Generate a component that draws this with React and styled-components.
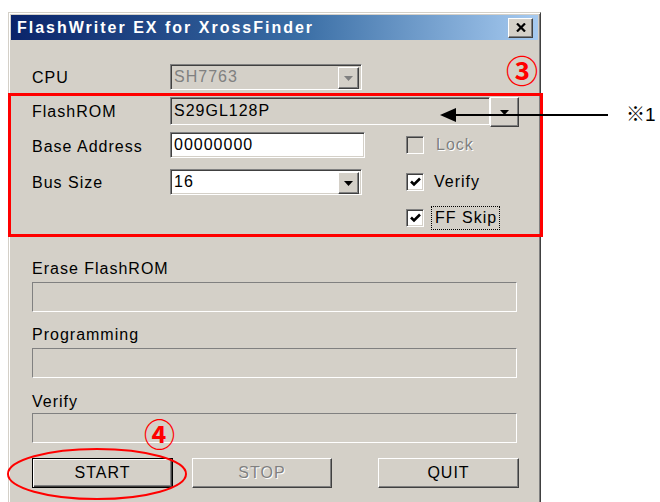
import React from 'react';
import styled, { createGlobalStyle, css } from 'styled-components';

const Global = createGlobalStyle`
  html, body { margin: 0; padding: 0; background: #fff; }
  body { font-family: "Liberation Sans", Arial, sans-serif; }
`;

const FACE = '#d4d0c8';
const SHADOW = '#808080';
const DARK = '#404040';

const Page = styled.div`
  position: relative;
  width: 660px;
  height: 502px;
  overflow: hidden;
  box-sizing: border-box;
  padding: 12px 0 0 8px;
  background: #fff;
`;

const Window = styled.div`
  width: 533px;
  height: 500px;
  box-sizing: border-box;
  background: ${FACE};
  border: 1px solid;
  border-color: ${FACE} ${DARK} ${DARK} ${FACE};
  box-shadow: inset 1px 1px #fff, inset -1px -1px ${SHADOW};
  padding: 2px;
  display: flex;
  flex-direction: column;
`;

const TitleBar = styled.div`
  height: 25px;
  flex: none;
  display: flex;
  align-items: center;
  justify-content: space-between;
  padding: 0 5px 0 6px;
  background: linear-gradient(to right, #0a246a 0%, #3a6ea5 55%, #a6caf0 100%);
`;

const Title = styled.span`
  color: #fff;
  font-weight: bold;
  font-size: 16px;
  letter-spacing: 2px;
  white-space: nowrap;
`;

const raised = css`
  border: 1px solid;
  border-color: #fff ${DARK} ${DARK} #fff;
  box-shadow: inset -1px -1px ${SHADOW}, inset 1px 1px ${FACE};
  background: ${FACE};
  box-sizing: border-box;
`;

const sunken = css`
  border: 1px solid;
  border-color: ${SHADOW} #fff #fff ${SHADOW};
  box-shadow: inset 1px 1px ${DARK}, inset -1px -1px ${FACE};
  box-sizing: border-box;
`;

const CloseButton = styled.div`
  ${raised};
  width: 25px;
  height: 20px;
  display: flex;
  align-items: center;
  justify-content: center;
`;

const Body = styled.div`
  padding: 24px 0 0 21px;
  display: flex;
  flex-direction: column;
`;

const Row = styled.div`
  display: flex;
  align-items: center;
  height: ${(p) => p.$h}px;
  margin-top: ${(p) => p.$mt || 0}px;
`;

const Label = styled.span`
  width: 138px;
  flex: none;
  font-size: 16px;
  letter-spacing: 1px;
  color: #000;
  white-space: nowrap;
  padding-top: ${(p) => p.$pt || 0}px;
`;

const Field = styled.div`
  ${sunken};
  position: relative;
  display: flex;
  align-items: center;
  width: ${(p) => p.$w}px;
  height: ${(p) => p.$h}px;
  flex: none;
  padding-left: 3px;
  background: ${(p) => (p.$white ? '#fff' : FACE)};
  color: ${(p) => (p.$disabled ? SHADOW : '#000')};
  font-size: 16px;
  letter-spacing: 1px;
`;

const DropButton = styled.div`
  ${raised};
  display: flex;
  align-items: center;
  justify-content: center;
  width: ${(p) => p.$w}px;
  height: ${(p) => p.$h}px;
  ${(p) =>
    p.$inside &&
    css`
      position: absolute;
      right: 2px;
      top: 2px;
    `}
`;

const ComboWrap = styled.div`
  display: flex;
  align-items: flex-start;
  height: 100%;
`;

const Arrow = ({ disabled }) => (
  <svg width="9" height="5" viewBox="0 0 9 5">
    <polygon points="0,0 9,0 4.5,5" fill={disabled ? SHADOW : '#000'} />
  </svg>
);

const CheckItem = styled.label`
  display: flex;
  align-items: center;
  margin-left: ${(p) => p.$ml}px;
  gap: ${(p) => p.$gap || 12}px;
  font-size: 16px;
  letter-spacing: 1px;
  color: ${(p) => (p.$disabled ? SHADOW : '#000')};
  text-shadow: ${(p) => (p.$disabled ? '1px 1px #fff' : 'none')};
`;

const Box = styled.span`
  ${sunken};
  width: 18px;
  height: 18px;
  flex: none;
  display: flex;
  align-items: center;
  justify-content: center;
  background: ${(p) => (p.$disabled ? FACE : '#fff')};
`;

const FocusText = styled.span`
  outline: 1px dotted #000;
  padding: 2px 2px 2px 3px;
`;

const Tick = () => (
  <svg width="11" height="10" viewBox="0 0 11 10">
    <polyline points="1,4.5 4,7.5 10,1.5" fill="none" stroke="#000" strokeWidth="2.6" />
  </svg>
);

const ProgressLabel = styled.div`
  font-size: 16px;
  letter-spacing: 1px;
  line-height: 18px;
  margin-top: ${(p) => p.$mt}px;
  color: #000;
`;

const ProgressBar = styled.div`
  width: 485px;
  height: 30px;
  margin-top: ${(p) => p.$mt}px;
  box-sizing: border-box;
  border: 1px solid;
  border-color: ${SHADOW} #fff #fff ${SHADOW};
  background: ${FACE};
`;

const ButtonRow = styled.div`
  display: flex;
  margin-top: 15px;
`;

const Button = styled.div`
  ${raised};
  width: ${(p) => p.$w}px;
  height: 30px;
  margin-left: ${(p) => p.$ml || 0}px;
  display: flex;
  align-items: center;
  justify-content: center;
  font-size: 16px;
  letter-spacing: 1px;
  color: ${(p) => (p.$disabled ? SHADOW : '#000')};
  text-shadow: ${(p) => (p.$disabled ? '1px 1px #fff' : 'none')};
  ${(p) =>
    p.$default &&
    css`
      border: 1px solid #000;
      box-shadow: inset 1px 1px #fff, inset -1px -1px ${DARK}, inset -2px -2px ${SHADOW};
    `}
`;

/* callouts drawn over the dialog */
const Frame = styled.div`
  position: absolute;
  left: 8px;
  top: 93px;
  width: 535px;
  height: 144px;
  box-sizing: border-box;
  border: 3px solid #f00;
  pointer-events: none;
`;

const Mark = styled.span`
  position: absolute;
  left: ${(p) => p.$x}px;
  top: ${(p) => p.$y}px;
  color: ${(p) => p.$color || '#f00'};
  font-size: ${(p) => p.$size}px;
  font-weight: ${(p) => p.$weight || 400};
  line-height: 1;
  font-family: ${(p) => p.$font || '"Noto Sans CJK JP", sans-serif'};
  white-space: nowrap;
`;

const Overlay = styled.svg`
  position: absolute;
  left: 0;
  top: 0;
  pointer-events: none;
`;

export default function App() {
  return (
    <Page>
      <Global />
      <Window>
        <TitleBar>
          <Title>FlashWriter EX for XrossFinder</Title>
          <CloseButton>
            <svg width="10" height="9" viewBox="0 0 10 9">
              <path d="M1 0.5 L9 8.5 M9 0.5 L1 8.5" stroke="#000" strokeWidth="2.2" />
            </svg>
          </CloseButton>
        </TitleBar>
        <Body>
          <Row $h={26}>
            <Label $pt={1}>CPU</Label>
            <Field $w={192} $h={26} $disabled>
              SH7763
              <DropButton $inside $w={21} $h={22}>
                <Arrow disabled />
              </DropButton>
            </Field>
          </Row>
          <Row $h={30} $mt={7}>
            <Label>FlashROM</Label>
            <ComboWrap>
              <Field $w={320} $h={28}>S29GL128P</Field>
              <DropButton $w={29} $h={30}>
                <Arrow />
              </DropButton>
            </ComboWrap>
          </Row>
          <Row $h={26} $mt={5}>
            <Label $pt={4}>Base Address</Label>
            <Field $w={195} $h={26} $white>
              00000000
            </Field>
            <CheckItem $ml={41} $disabled>
              <Box $disabled />
              Lock
            </CheckItem>
          </Row>
          <Row $h={26} $mt={11}>
            <Label $pt={2}>Bus Size</Label>
            <Field $w={192} $h={26} $white>
              16
              <DropButton $inside $w={21} $h={22}>
                <Arrow />
              </DropButton>
            </Field>
            <CheckItem $ml={44} $gap={10}>
              <Box>
                <Tick />
              </Box>
              Verify
            </CheckItem>
          </Row>
          <Row $h={24} $mt={11}>
            <CheckItem $ml={374} $gap={8}>
              <Box>
                <Tick />
              </Box>
              <FocusText>FF Skip</FocusText>
            </CheckItem>
          </Row>

          <ProgressLabel $mt={30}>Erase FlashROM</ProgressLabel>
          <ProgressBar $mt={4} />
          <ProgressLabel $mt={14}>Programming</ProgressLabel>
          <ProgressBar $mt={4} />
          <ProgressLabel $mt={15}>Verify</ProgressLabel>
          <ProgressBar $mt={2} />

          <ButtonRow>
            <Button $w={141} $default>START</Button>
            <Button $w={140} $ml={19} $disabled>STOP</Button>
            <Button $w={141} $ml={46}>QUIT</Button>
          </ButtonRow>
        </Body>
      </Window>

      <Frame />
      <Mark $x={506} $y={53} $size={32} $weight={700}>③</Mark>
      <Mark $x={144} $y={417} $size={31} $weight={700}>④</Mark>
      <Mark $x={626} $y={103} $size={19} $color="#000">
        ※<span style={{ fontFamily: '"Liberation Sans", Arial, sans-serif' }}>1</span>
      </Mark>
      <Overlay width="660" height="502" viewBox="0 0 660 502">
        <line x1="452" y1="115" x2="608" y2="115" stroke="#000" strokeWidth="2" />
        <polygon points="440,115 456,108 456,122" fill="#000" />
        <ellipse cx="97" cy="474" rx="89" ry="25" fill="none" stroke="#f00" strokeWidth="2" />
      </Overlay>
    </Page>
  );
}
